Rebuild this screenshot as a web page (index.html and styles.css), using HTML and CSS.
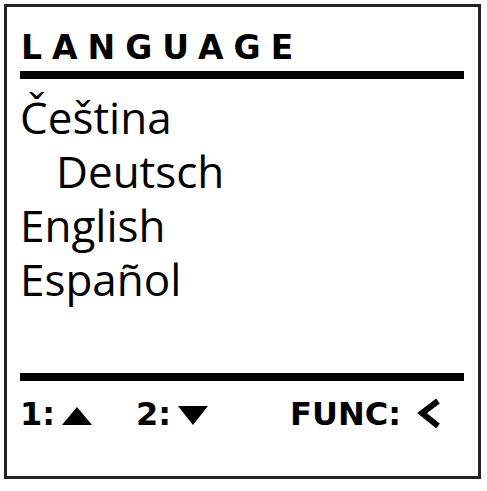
FILE: index.html
```html
<!DOCTYPE html>
<html lang="en">
<head>
  <meta charset="UTF-8" />
  <title>Language</title>
  <link rel="stylesheet" href="styles.css">
</head>
<body>
  <div class="screen">
    <h1 class="title">LANGUAGE</h1>
    <div class="rule"></div>

    <ul class="menu">
      <li>Čeština</li>
      <li class="selected">Deutsch</li>
      <li>English</li>
      <li>Español</li>
    </ul>

    <div class="rule"></div>
    <div class="keys">
      <span class="key">1:<svg class="arrow" width="30" height="18" viewBox="0 0 30 18"><polygon points="15,0 30,18 0,18"/></svg></span>
      <span class="key key-down">2:<svg class="arrow" width="30" height="19" viewBox="0 0 30 19"><polygon points="0,0 30,0 15,19"/></svg></span>
      <span class="key key-func">FUNC:<svg class="back" width="26" height="32" viewBox="0 0 26 32"><polyline points="22,3 6,15 22,28"/></svg></span>
    </div>
  </div>
</body>
</html>
```

FILE: styles.css
```css
body {
  margin: 0;
  background: #fff;
  color: #000;
}

/* display frame */
.screen {
  margin: 4px;
  width: 477px;
  height: 475px;
  border: 3px solid #222;
  padding: 24px 14px 46px 13px;
  box-sizing: border-box;
  display: flex;
  flex-direction: column;
}

.title {
  margin: 0;
  padding-left: 1px;
  font-family: "DejaVu Sans", sans-serif;
  font-weight: bold;
  font-size: 33px;
  line-height: 33px;
  letter-spacing: 10px;
}

.rule {
  height: 8px;
  background: #000;
  margin-top: 7px;
}

.menu {
  list-style: none;
  margin: 11px 0 0;
  padding: 0;
  flex: 1;
  font-family: "Open Sans", sans-serif;
  font-size: 44px;
  line-height: 54px;
}

.menu .selected {
  padding-left: 36px;
}

/* soft key legend */
.keys {
  display: flex;
  margin-top: 17px;
  font-family: "DejaVu Sans", sans-serif;
  font-weight: bold;
  font-size: 32px;
  line-height: 32px;
}

.arrow {
  margin-left: 7px;
  vertical-align: baseline;
}

.key-down {
  margin-left: 44px;
}

.key-func {
  margin-left: auto;
  margin-right: 22px;
}

.back {
  margin-left: 15px;
  vertical-align: -5px;
}

.back polyline {
  fill: none;
  stroke: #000;
  stroke-width: 6;
  stroke-linecap: butt;
}
```
